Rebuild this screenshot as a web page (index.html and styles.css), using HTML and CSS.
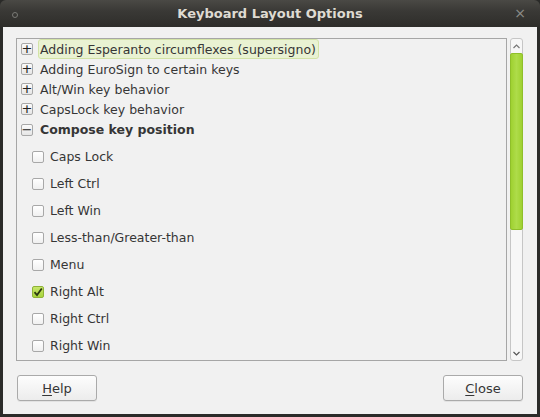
FILE: index.html
```html
<!DOCTYPE html>
<html>
<head>
<meta charset="utf-8">
<link rel="stylesheet" href="styles.css">
</head>
<body>
<div class="window">
  <div class="titlebar">
    <span class="menu-dot"></span>
    <span class="title">Keyboard Layout Options</span>
    <span class="close-x">×</span>
  </div>
  <div class="content">
    <div class="tree-area">
      <div class="tree">
        <div class="row"><span class="expander">+</span><span class="label selected">Adding Esperanto circumflexes (supersigno)</span></div>
        <div class="row"><span class="expander">+</span><span class="label">Adding EuroSign to certain keys</span></div>
        <div class="row"><span class="expander">+</span><span class="label">Alt/Win key behavior</span></div>
        <div class="row"><span class="expander">+</span><span class="label">CapsLock key behavior</span></div>
        <div class="row open"><span class="expander">−</span><span class="label bold">Compose key position</span></div>
        <div class="options">
          <div class="opt"><span class="check"></span><span>Caps Lock</span></div>
          <div class="opt"><span class="check"></span><span>Left Ctrl</span></div>
          <div class="opt"><span class="check"></span><span>Left Win</span></div>
          <div class="opt"><span class="check"></span><span>Less-than/Greater-than</span></div>
          <div class="opt"><span class="check"></span><span>Menu</span></div>
          <div class="opt"><span class="check checked"><svg width="10" height="10" viewBox="0 0 10 10"><path d="M1.5 5.2 L4 8 L8.8 1.5" fill="none" stroke="#2c3a10" stroke-width="1.8"/></svg></span><span>Right Alt</span></div>
          <div class="opt"><span class="check"></span><span>Right Ctrl</span></div>
          <div class="opt"><span class="check"></span><span>Right Win</span></div>
        </div>
      </div>
      <div class="scrollbar">
        <div class="stepper"><svg width="7" height="5" viewBox="0 0 7 5"><path d="M0.5 4 L3.5 1 L6.5 4" fill="none" stroke="#777" stroke-width="1.2"/></svg></div>
        <div class="thumb"></div>
        <div class="trough"></div>
        <div class="stepper"><svg width="7" height="5" viewBox="0 0 7 5"><path d="M0.5 1 L3.5 4 L6.5 1" fill="none" stroke="#555" stroke-width="1.2"/></svg></div>
      </div>
    </div>
    <div class="buttons">
      <button class="btn"><u>H</u>elp</button>
      <button class="btn"><u>C</u>lose</button>
    </div>
  </div>
</div>
</body>
</html>
```

FILE: styles.css
```css
* { box-sizing: border-box; }
html, body {
  margin: 0;
  padding: 0;
  background: #2a2a28;
}
body {
  width: 540px;
  height: 417px;
  font-family: "DejaVu Sans", sans-serif;
  font-size: 12.5px;
  color: #363636;
}
.window {
  width: 540px;
  height: 417px;
  display: flex;
  flex-direction: column;
  background: #2b2b29;
  border-radius: 6px 6px 0 0;
  overflow: hidden;
}
.titlebar {
  height: 27px;
  flex: none;
  display: flex;
  align-items: center;
  justify-content: center;
  position: relative;
  background: linear-gradient(#4a4945, #3a3936 40%, #2e2d2a);
}
.title {
  font-weight: bold;
  font-size: 13px;
  color: #dfdbd2;
}
.menu-dot {
  position: absolute;
  left: 12px;
  top: 12px;
  width: 6px;
  height: 6px;
  border-radius: 50%;
  border: 1.5px solid #7a7a76;
}
.close-x {
  position: absolute;
  right: 14px;
  top: 5px;
  color: #8e8d88;
  font-size: 14px;
}
.content {
  flex: 1;
  margin: 0 3px 4px 3px;
  background: #f1f1f1;
  padding: 11px 14px 13px 13px;
  display: flex;
  flex-direction: column;
}
.tree-area {
  display: flex;
  gap: 3px;
  height: 323px;
}
.tree {
  flex: 1;
  border: 1px solid #a6a6a6;
  background: #f1f1f1;
  overflow: hidden;
}
.row {
  height: 20px;
  display: flex;
  align-items: center;
  padding-left: 4px;
}
.row.open { height: 21px; }
.expander {
  width: 12px;
  height: 12px;
  border: 1px solid #a8a8a8;
  border-radius: 2px;
  background: linear-gradient(#fbfbfb, #e6e6e6);
  display: flex;
  align-items: center;
  justify-content: center;
  font-size: 13px;
  line-height: 1;
  color: #222;
  margin-right: 5px;
  padding-bottom: 1px;
}
.label {
  height: 20px;
  display: flex;
  align-items: center;
  padding: 0 2px 0 1px;
  border: 1px solid transparent;
  border-radius: 3px;
}
.label.selected {
  background: #e9f2d2;
  border-color: #d2e3a6;
}
.label.bold { font-weight: bold; }
.options {
  padding-top: 3px;
}
.opt {
  height: 27px;
  display: flex;
  align-items: center;
  padding-left: 15px;
  gap: 6px;
}
.check {
  width: 12px;
  height: 12px;
  border: 1px solid #a8a8a8;
  border-radius: 2px;
  background: linear-gradient(#ffffff, #f0f0f0);
  display: flex;
  align-items: center;
  justify-content: center;
}
.check.checked {
  background: linear-gradient(#c6e66a, #a8d43c);
  border-color: #8fb237;
}
.scrollbar {
  width: 13px;
  border: 1px solid #c6c6c6;
  border-radius: 3px;
  background: #f7f7f7;
  display: flex;
  flex-direction: column;
}
.stepper {
  height: 14px;
  display: flex;
  align-items: center;
  justify-content: center;
  flex: none;
}
.thumb {
  height: 177px;
  flex: none;
  margin: 0 -1px;
  background: linear-gradient(90deg, #9fd131, #aedc4a 50%, #9fd131);
  border: 1px solid #8fbf2a;
  border-radius: 2px;
}
.trough { flex: 1; }
.buttons {
  margin-top: 14px;
  display: flex;
  justify-content: space-between;
  padding-left: 1px;
}
.btn {
  width: 80px;
  height: 26px;
  font-family: "DejaVu Sans", sans-serif;
  font-size: 13px;
  color: #363636;
  border: 1px solid #aaaaaa;
  border-radius: 3px;
  background: linear-gradient(#fdfdfd, #ececec);
  box-shadow: 0 1px 0 rgba(0,0,0,0.06);
  padding: 0;
}
.btn u { text-underline-offset: 2px; }
```
